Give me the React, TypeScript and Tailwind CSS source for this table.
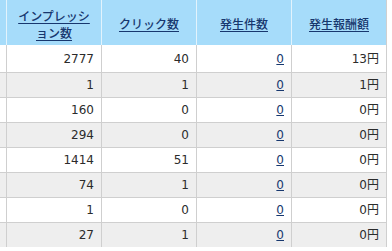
import React from "react";

const rows: [string, string, string, string][] = [
  ["2777", "40", "0", "13円"],
  ["1", "1", "0", "1円"],
  ["160", "0", "0", "0円"],
  ["294", "0", "0", "0円"],
  ["1414", "51", "0", "0円"],
  ["74", "1", "0", "0円"],
  ["1", "0", "0", "0円"],
  ["27", "1", "0", "0円"],
];

const font = { fontFamily: '"DejaVu Sans", "Noto Sans CJK JP", sans-serif' };

export default function App() {
  return (
    <div className="w-[392px] h-[251px] bg-white overflow-hidden text-[12px] text-[#2b2b2b]" style={font}>
      <div className="w-[387px] border-r border-[#cfcfcf]">
        <div className="flex h-[45px] bg-[#a6dcfa] text-[#17376e]">
          <div className="w-[6px]" />
          {["インプレッション数", "クリック数", "発生件数", "発生報酬額"].map((h) => (
            <div
              key={h}
              className="w-[95px] border-l border-[#e2f3fc] flex items-center justify-center px-[6px] pt-[2px] text-center leading-[17px] font-medium"
              style={{ fontFamily: '"Noto Sans CJK JP", sans-serif' }}
            >
              <span className="underline underline-offset-2">{h}</span>
            </div>
          ))}
        </div>
        {rows.map((r, i) => (
          <div
            key={i}
            className={`flex ${i === 0 ? "h-[27px]" : "h-[25px] border-t border-[#cfcfcf]"} ${
              i % 2 === 1 ? "bg-[#eeeeee]" : "bg-white"
            }`}
          >
            <div className="w-[6px]" />
            <div className="w-[95px] border-l border-[#cfcfcf] flex items-center justify-end pr-[7px]">{r[0]}</div>
            <div className="w-[95px] border-l border-[#cfcfcf] flex items-center justify-end pr-[7px]">{r[1]}</div>
            <div className="w-[95px] border-l border-[#cfcfcf] flex items-center justify-end pr-[7px]">
              <span className="underline text-[#17376e]">{r[2]}</span>
            </div>
            <div className="w-[95px] border-l border-[#cfcfcf] flex items-center justify-end pr-[7px]">{r[3]}</div>
          </div>
        ))}
      </div>
    </div>
  );
}
